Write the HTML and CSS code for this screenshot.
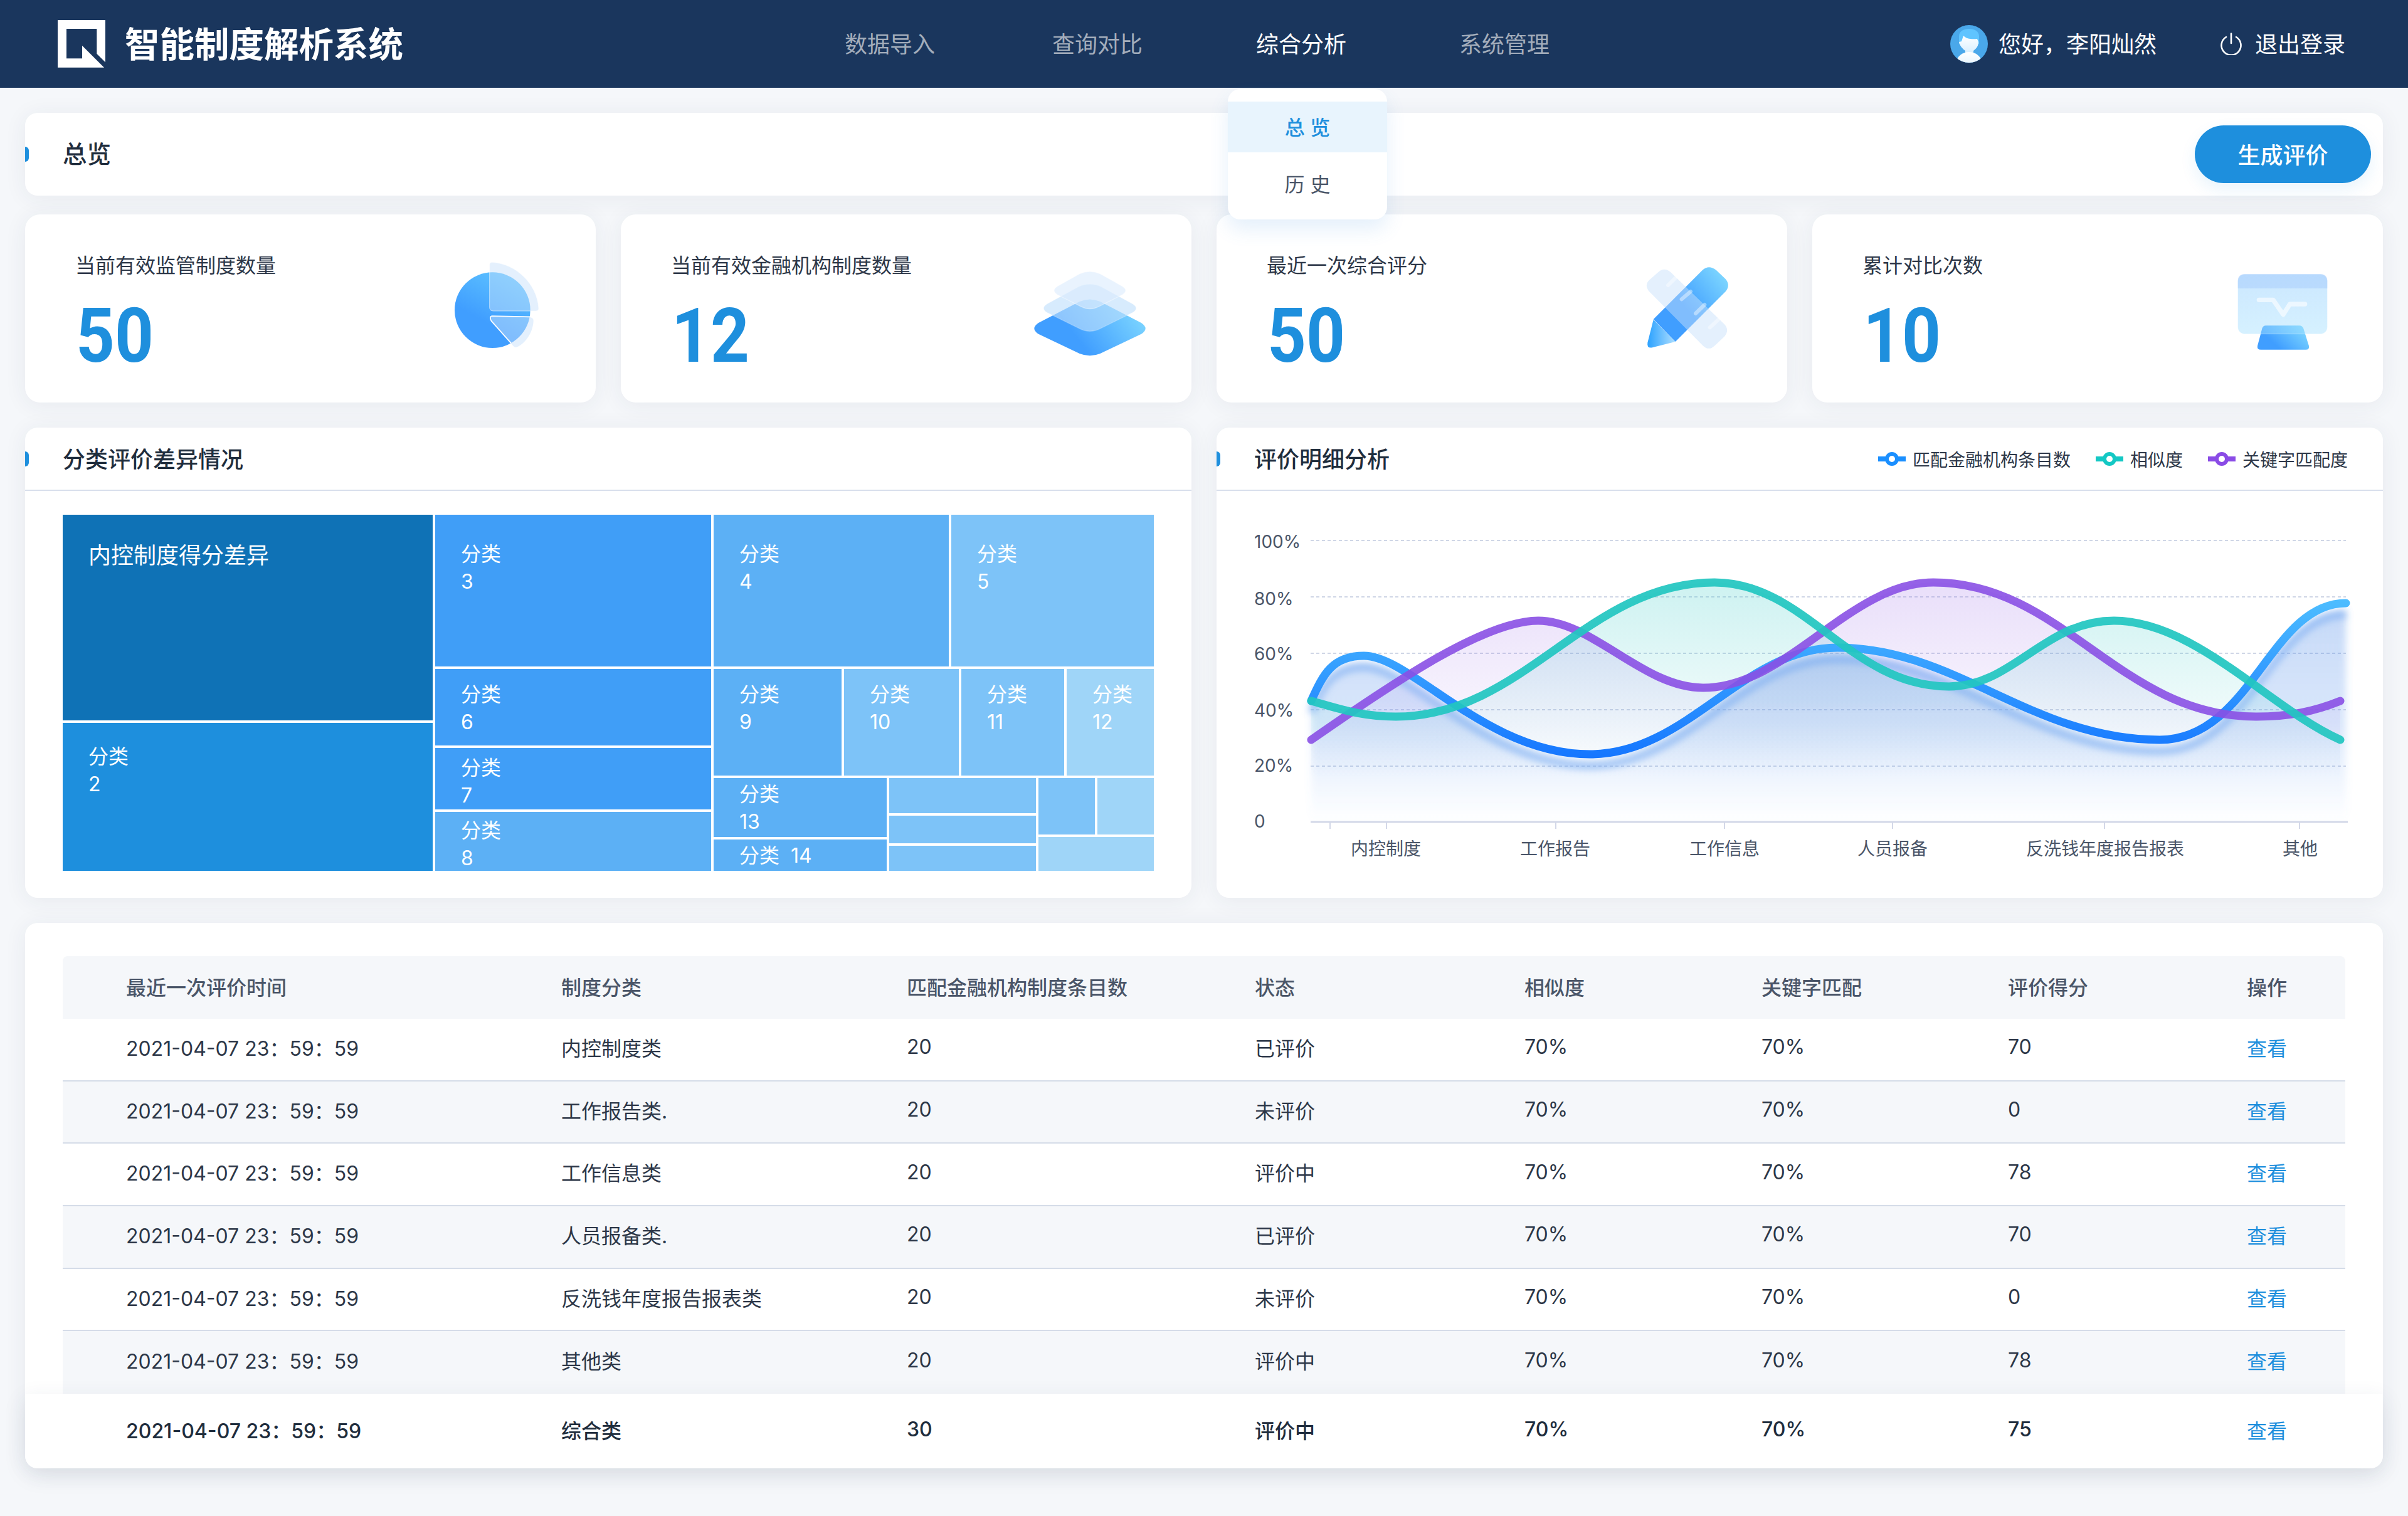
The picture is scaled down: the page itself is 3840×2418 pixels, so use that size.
FILE: index.html
```html
<!DOCTYPE html>
<html lang="zh-CN">
<head>
<meta charset="utf-8">
<title>智能制度解析系统</title>
<link rel="stylesheet" href="styles.css">
</head>
<body>
<header class="topbar">
  <svg class="logo" viewBox="96 66 228 228"><path fill="#fff" d="M96 66H324V268L283 227V108H138V250H213V188L318 293H96Z"/></svg>
  <div class="brand">智能制度解析系统</div>
  <nav class="nav">
    <a class="nav-item">数据导入</a>
    <a class="nav-item">查询对比</a>
    <div class="nav-item is-active">综合分析
      <div class="dropdown">
        <div class="dropdown-item is-current">总 览</div>
        <div class="dropdown-item">历 史</div>
      </div>
    </div>
    <a class="nav-item">系统管理</a>
  </nav>
  <div class="user">
    <svg class="avatar" viewBox="0 0 60 60">
      <defs>
        <clipPath id="avc"><circle cx="30" cy="30" r="30"/></clipPath>
        <linearGradient id="avw" x1="0" y1="0" x2="0" y2="1"><stop offset="0" stop-color="#fff"/><stop offset="1" stop-color="#d7efff"/></linearGradient>
      </defs>
      <g clip-path="url(#avc)">
        <rect width="60" height="60" fill="#4aa8ea"/>
        <path fill="#5fc4ff" d="M14 30V18C14 10 21 6 30 6S46 10 46 18V30Z"/>
        <path fill="url(#avw)" d="M21 17C26 22 34 23 43 22L45 27C45 34 41 38 37 41V45H24V41C20 38 15 33 14 27L18 26Z"/>
        <ellipse cx="30" cy="60" rx="20" ry="17" fill="url(#avw)"/>
      </g>
    </svg>
    <span class="user-name">您好，李阳灿然</span>
    <svg class="power" viewBox="0 0 34 36"><path fill="none" stroke="#fff" stroke-width="2.6" stroke-linecap="round" d="M9 7A15.5 15.5 0 1 0 25 7M17 1.5V17"/></svg>
    <span class="logout">退出登录</span>
  </div>
</header>

<main class="page">
  <section class="panel overview">
    <i class="marker"></i>
    <h1 class="panel-title">总览</h1>
    <button class="primary-btn">生成评价</button>
  </section>

  <section class="stats">
    <article class="stat">
      <div class="stat-text"><div class="stat-label">当前有效监管制度数量</div><div class="stat-value">50</div></div>
      <svg class="stat-icon" viewBox="30 30 720 600">
        <defs>
          <linearGradient id="g1" x1="0.75" y1="0" x2="0.4" y2="0.65"><stop offset="0" stop-color="#5fc4ff"/><stop offset="1" stop-color="#409eff"/></linearGradient>
        </defs>
        <circle cx="376" cy="314" r="181" fill="url(#g1)"/>
        <path fill="#c6dffa" fill-opacity=".48" stroke="#fff" stroke-opacity=".55" stroke-width="3" d="M375 85C490 92 590 190 597 305Q597 318 584 318H380Q362 318 362 300V98Q362 85 375 85Z"/>
        <path fill="#c6dffa" fill-opacity=".48" d="M373 342L555 348Q572 350 572 365C570 420 535 470 495 490Q485 495 475 485L370 365Q360 345 373 342Z"/>
        <path fill="none" stroke="#fff" stroke-width="5" d="M555 346L373 342Q360 345 370 365L465 472"/>
      </svg>
    </article>
    <article class="stat">
      <div class="stat-text"><div class="stat-label">当前有效金融机构制度数量</div><div class="stat-value">12</div></div>
      <svg class="stat-icon" viewBox="0 0 720 600">
        <defs>
          <linearGradient id="g2" x1="0.35" y1="0.6" x2="1" y2="0.35"><stop offset="0" stop-color="#409eff"/><stop offset="1" stop-color="#7dd6ff"/></linearGradient>
        </defs>
        <path fill="url(#g2)" d="M305 243Q354 222 403 243L600 345Q640 372 600 398L403 492Q354 512 305 492L108 398Q68 372 108 345Z"/>
        <path fill="#bfdffc" fill-opacity=".62" stroke="#fff" stroke-opacity=".25" stroke-width="4" d="M300 172Q354 148 408 172L560 255Q590 275 560 295L408 370Q354 400 300 370L148 295Q118 275 148 255Z"/>
        <path fill="#dcecfd" fill-opacity=".62" stroke="#fff" stroke-opacity=".4" stroke-width="4" d="M305 110Q354 88 403 110L510 170Q540 190 510 210L400 265Q354 290 308 265L198 210Q168 190 198 170Z"/>
      </svg>
    </article>
    <article class="stat">
      <div class="stat-text"><div class="stat-label">最近一次综合评分</div><div class="stat-value">50</div></div>
      <svg class="stat-icon" viewBox="-60 0 720 600">
        <defs>
          <linearGradient id="g3" gradientUnits="userSpaceOnUse" x1="200" y1="360" x2="490" y2="130"><stop offset=".35" stop-color="#409eff"/><stop offset="1" stop-color="#7dd6ff"/></linearGradient>
          <linearGradient id="g3b" gradientUnits="userSpaceOnUse" x1="120" y1="400" x2="240" y2="400"><stop offset="0" stop-color="#33a5ff"/><stop offset="1" stop-color="#a8dcff"/></linearGradient>
        </defs>
        <path fill="url(#g3)" d="M140 328L375 92Q405 65 440 92L485 135Q510 165 485 195L245 435Z"/>
        <path fill="url(#g3b)" d="M140 330L245 435L135 463Q108 468 112 440Z"/>
        <path fill="#c6dffa" fill-opacity=".48" d="M160 105Q190 75 222 102L480 352Q505 380 480 410L432 455Q405 480 378 455L120 195Q95 165 120 140Z"/>
        <path fill="none" stroke="#fff" stroke-opacity=".42" stroke-width="18" stroke-linecap="round" d="M210 165L245 130M275 232L318 195M342 300L385 258M410 367L450 330"/>
      </svg>
    </article>
    <article class="stat">
      <div class="stat-text"><div class="stat-label">累计对比次数</div><div class="stat-value">10</div></div>
      <svg class="stat-icon" viewBox="-30 -30 720 600">
        <defs>
          <linearGradient id="g4" x1="0.1" y1="0.75" x2="1" y2="0.3"><stop offset=".2" stop-color="#409eff"/><stop offset="1" stop-color="#7dd6ff"/></linearGradient>
          <linearGradient id="g4b" x1="0" y1="0" x2="0" y2="1"><stop offset="0" stop-color="#8ccafe"/><stop offset="1" stop-color="#a3e0ff"/></linearGradient>
        </defs>
        <path fill="url(#g4)" d="M250 328H410Q425 328 430 342L456 425Q460 443 440 443H226Q206 443 210 425L232 342Q236 328 250 328Z"/>
        <rect x="116" y="82" width="428" height="286" rx="32" fill="url(#g4b)" fill-opacity=".45" stroke="#fff" stroke-opacity=".3" stroke-width="3"/>
        <path fill="#8cb8fb" fill-opacity=".3" d="M148 82H512Q544 82 544 114V150H116V114Q116 82 148 82Z"/>
        <path fill="none" stroke="#fff" stroke-opacity=".6" stroke-width="22" stroke-linecap="round" stroke-linejoin="round" d="M217 205H285L333 275L365 225H437"/>
      </svg>
    </article>
  </section>

  <section class="charts">
    <article class="panel chart-panel">
      <header class="panel-head"><i class="marker"></i><h2 class="panel-title">分类评价差异情况</h2></header>
      <div class="treemap">
        <div class="tm-col" style="width:590px">
          <div class="cell tone-0 pad-f big" style="height:328px"><span>内控制度得分差异</span></div>
          <div class="cell tone-1 pad-c" style="height:236px"><span>分类</span><span>2</span></div>
        </div>
        <div class="tm-col" style="width:440px">
          <div class="cell tone-2 pad-a" style="height:242px"><span>分类</span><span>3</span></div>
          <div class="cell tone-2 pad-b" style="height:122px"><span>分类</span><span>6</span></div>
          <div class="cell tone-2 pad-d" style="height:98px"><span>分类</span><span>7</span></div>
          <div class="cell tone-3 pad-g" style="height:94px"><span>分类</span><span>8</span></div>
        </div>
        <div class="tm-col" style="width:702px">
          <div class="tm-row" style="height:242px">
            <div class="cell tone-3 pad-a" style="width:375px"><span>分类</span><span>4</span></div>
            <div class="cell tone-4 pad-a" style="width:323px"><span>分类</span><span>5</span></div>
          </div>
          <div class="tm-row" style="height:170px">
            <div class="cell tone-3 pad-b" style="width:204px"><span>分类</span><span>9</span></div>
            <div class="cell tone-4 pad-b" style="width:183px"><span>分类</span><span>10</span></div>
            <div class="cell tone-4 pad-b" style="width:164px"><span>分类</span><span>11</span></div>
            <div class="cell tone-5 pad-b" style="width:139px"><span>分类</span><span>12</span></div>
          </div>
          <div class="tm-row" style="height:148px">
            <div class="tm-col" style="width:276px">
              <div class="cell tone-3 pad-e" style="height:94px"><span>分类</span><span>13</span></div>
              <div class="cell tone-3 pad-e" style="height:50px"><span>分类&nbsp; 14</span></div>
            </div>
            <div class="tm-col" style="width:234px">
              <div class="cell tone-4" style="height:56px"></div>
              <div class="cell tone-4" style="height:44px"></div>
              <div class="cell tone-4" style="height:40px"></div>
            </div>
            <div class="tm-col" style="width:184px">
              <div class="tm-row" style="height:90px">
                <div class="cell tone-4" style="width:90px"></div>
                <div class="cell tone-5" style="width:90px"></div>
              </div>
              <div class="cell tone-5" style="height:54px"></div>
            </div>
          </div>
        </div>
      </div>
    </article>

    <article class="panel chart-panel">
      <header class="panel-head"><i class="marker"></i><h2 class="panel-title">评价明细分析</h2>
        <ul class="legend">
          <li class="legend-item"><svg class="legend-mark" viewBox="0 0 44 24"><path d="M0 12H44" stroke="#1a8fff" stroke-width="8"/><circle cx="22" cy="12" r="8" fill="#fff" stroke="#1a8fff" stroke-width="6"/></svg>匹配金融机构条目数</li>
          <li class="legend-item"><svg class="legend-mark" viewBox="0 0 44 24"><path d="M0 12H44" stroke="#14c8c4" stroke-width="8"/><circle cx="22" cy="12" r="8" fill="#fff" stroke="#14c8c4" stroke-width="6"/></svg>相似度</li>
          <li class="legend-item"><svg class="legend-mark" viewBox="0 0 44 24"><path d="M0 12H44" stroke="#8a4be6" stroke-width="8"/><circle cx="22" cy="12" r="8" fill="#fff" stroke="#8a4be6" stroke-width="6"/></svg>关键字匹配度</li>
        </ul>
      </header>
      <svg class="line-chart" viewBox="1940 784 1860 648">
        <defs>
          <linearGradient id="fb" gradientUnits="userSpaceOnUse" x1="0" y1="960" x2="0" y2="1300"><stop offset="0" stop-color="#3d7fe6" stop-opacity=".3"/><stop offset=".55" stop-color="#5c96ee" stop-opacity=".22"/><stop offset="1" stop-color="#6aa4f5" stop-opacity="0"/></linearGradient>
          <linearGradient id="ft" gradientUnits="userSpaceOnUse" x1="0" y1="925" x2="0" y2="1240"><stop offset="0" stop-color="#2ec8c4" stop-opacity=".24"/><stop offset="1" stop-color="#2ec8c4" stop-opacity="0"/></linearGradient>
          <linearGradient id="fp" gradientUnits="userSpaceOnUse" x1="0" y1="925" x2="0" y2="1240"><stop offset="0" stop-color="#8f5ae5" stop-opacity=".2"/><stop offset="1" stop-color="#8f5ae5" stop-opacity="0"/></linearGradient>
          <linearGradient id="sb" gradientUnits="userSpaceOnUse" x1="0" y1="960" x2="0" y2="1205"><stop offset="0" stop-color="#4cbcff"/><stop offset="1" stop-color="#1677ff"/></linearGradient>
          <filter id="soft" x="-5%" y="-20%" width="110%" height="140%"><feGaussianBlur stdDeviation="6"/></filter>
        </defs>
        <g class="grid">
          <path d="M2090 862H3741"/><path d="M2090 952H3741"/><path d="M2090 1042H3741"/><path d="M2090 1132H3741"/><path d="M2090 1222H3741"/>
        </g>
        <g class="axis-y">
          <text x="2000" y="874">100%</text><text x="2000" y="965">80%</text><text x="2000" y="1053">60%</text><text x="2000" y="1143">40%</text><text x="2000" y="1231">20%</text><text x="2000" y="1320">0</text>
        </g>
        <path fill="url(#fb)" filter="url(#soft)" transform="translate(0 12)" d="M2091 1118C2110 1075 2125 1046 2175 1046C2250 1046 2370 1203 2536 1203C2690 1203 2780 1033 2930 1033C3120 1033 3240 1180 3444 1180C3590 1180 3620 962 3741 962V1295H2091Z"/>
        <path fill="url(#ft)" d="M2091 1118C2135 1130 2170 1143 2226 1143C2430 1143 2530 929 2734 929C2880 929 2950 1095 3108 1095C3210 1095 3260 990 3371 990C3500 990 3620 1130 3732 1180V1311H2091Z"/>
        <path fill="url(#fp)" d="M2091 1180C2230 1083 2370 990 2453 990C2540 990 2620 1097 2716 1097C2850 1097 2950 929 3083 929C3290 929 3380 1143 3598 1143C3650 1143 3690 1135 3732 1118V1311H2091Z"/>
        <path fill="none" stroke="#6fa6f2" stroke-opacity=".6" stroke-width="12" filter="url(#soft)" transform="translate(0 18)" d="M2091 1118C2110 1075 2125 1046 2175 1046C2250 1046 2370 1203 2536 1203C2690 1203 2780 1033 2930 1033C3120 1033 3240 1180 3444 1180C3590 1180 3620 962 3741 962"/>
        <path class="curve" stroke="url(#sb)" d="M2091 1118C2110 1075 2125 1046 2175 1046C2250 1046 2370 1203 2536 1203C2690 1203 2780 1033 2930 1033C3120 1033 3240 1180 3444 1180C3590 1180 3620 962 3741 962"/>
        <path class="curve curve-purple" d="M2091 1180C2230 1083 2370 990 2453 990C2540 990 2620 1097 2716 1097C2850 1097 2950 929 3083 929C3290 929 3380 1143 3598 1143C3650 1143 3690 1135 3732 1118"/>
        <path class="curve curve-teal" d="M2091 1118C2135 1130 2170 1143 2226 1143C2430 1143 2530 929 2734 929C2880 929 2950 1095 3108 1095C3210 1095 3260 990 3371 990C3500 990 3620 1130 3732 1180"/>
        <path class="axis-line" d="M2090 1311H3744"/>
        <path class="tick" d="M2121 1311V1322M2211 1311V1322M2481 1311V1322M2750 1311V1322M3018 1311V1322M3356 1311V1322M3667 1311V1322"/>
        <g class="axis-x">
          <text x="2210" y="1364">内控制度</text><text x="2480" y="1364">工作报告</text><text x="2750" y="1364">工作信息</text><text x="3018" y="1364">人员报备</text><text x="3357" y="1364">反洗钱年度报告报表</text><text x="3668" y="1364">其他</text>
        </g>
      </svg>
    </article>
  </section>

  <section class="panel table-panel">
    <div class="t-row t-head"><span>最近一次评价时间</span><span>制度分类</span><span>匹配金融机构制度条目数</span><span>状态</span><span>相似度</span><span>关键字匹配</span><span>评价得分</span><span>操作</span></div>
    <div class="t-row"><span>2021-04-07 23：59：59</span><span>内控制度类</span><span>20</span><span>已评价</span><span>70%</span><span>70%</span><span>70</span><a class="link">查看</a></div>
    <div class="t-row t-alt"><span>2021-04-07 23：59：59</span><span>工作报告类.</span><span>20</span><span>未评价</span><span>70%</span><span>70%</span><span>0</span><a class="link">查看</a></div>
    <div class="t-row"><span>2021-04-07 23：59：59</span><span>工作信息类</span><span>20</span><span>评价中</span><span>70%</span><span>70%</span><span>78</span><a class="link">查看</a></div>
    <div class="t-row t-alt"><span>2021-04-07 23：59：59</span><span>人员报备类.</span><span>20</span><span>已评价</span><span>70%</span><span>70%</span><span>70</span><a class="link">查看</a></div>
    <div class="t-row"><span>2021-04-07 23：59：59</span><span>反洗钱年度报告报表类</span><span>20</span><span>未评价</span><span>70%</span><span>70%</span><span>0</span><a class="link">查看</a></div>
    <div class="t-row t-alt t-last"><span>2021-04-07 23：59：59</span><span>其他类</span><span>20</span><span>评价中</span><span>70%</span><span>70%</span><span>78</span><a class="link">查看</a></div>
    <div class="t-row t-total"><span>2021-04-07 23：59：59</span><span>综合类</span><span>30</span><span>评价中</span><span>70%</span><span>70%</span><span>75</span><a class="link">查看</a></div>
  </section>
</main>
</body>
</html>
```
FILE: styles.css
```css
* { box-sizing: border-box; }
html, body { margin: 0; padding: 0; height: 2418px; overflow: hidden; }
body {
  width: 3840px;
  background: #f5f7fa;
  font-family: "Inter", "Noto Sans CJK SC", sans-serif;
  color: #2d3748;
  font-size: 32px;
}
h1, h2, ul { margin: 0; padding: 0; list-style: none; }

.topbar {
  height: 140px;
  background: #1a365d;
  display: flex;
  align-items: center;
  padding: 0 100px 0 92px;
  color: #fff;
}
.logo { width: 76px; height: 76px; flex: none; }
.brand {
  margin: 0 0 6px 31px;
  width: 449px;
  font-size: 55.5px;
  font-weight: 700;
  white-space: nowrap;
}
.nav {
  display: grid;
  grid-template-columns: 331px 325px 324px 144px;
  margin: 0 0 4px 699px;
  font-size: 36px;
}
.nav-item { position: relative; color: #a3adbb; white-space: nowrap; }
.nav-item.is-active { color: #fff; }
.dropdown {
  position: absolute;
  top: 100px;
  left: -45px;
  width: 254px;
  height: 208px;
  padding-top: 20px;
  background: #fff;
  border-radius: 20px;
  box-shadow: 0 16px 30px rgba(70, 150, 230, .14);
  z-index: 5;
  font-size: 32px;
  color: #4a5568;
  text-align: center;
}
.dropdown-item { height: 81px; line-height: 84px; margin-bottom: 10px; }
.dropdown-item.is-current { background: #e8f4fd; color: #1e8fdd; font-weight: 500; }

.user { margin-left: auto; display: flex; align-items: center; font-size: 36px; }
.avatar { width: 60px; height: 60px; }
.user-name { margin: 0 0 4px 17px; width: 252px; white-space: nowrap; }
.power { width: 34px; height: 36px; margin-left: 102px; }
.logout { margin: 0 0 4px 21px; white-space: nowrap; }

.page { padding: 40px 40px 76px; display: flex; flex-direction: column; }
.panel {
  background: #fff;
  border-radius: 20px;
  box-shadow: 0 4px 36px rgba(40, 60, 90, .07);
}
.marker {
  flex: none;
  display: block;
  width: 6px;
  height: 24px;
  border-radius: 0 12px 12px 0;
  background: #1e8fdd;
}
.panel-title { font-size: 36px; font-weight: 500; color: #1f2d3d; margin: 0 0 4px 54px; white-space: nowrap; }

.overview {
  height: 132px;
  display: flex;
  align-items: center;
  padding-right: 19px;
}
.overview .panel-title { font-size: 38.5px; margin-bottom: 6px; }
.primary-btn {
  margin-left: auto;
  width: 281px;
  height: 92px;
  border: 0;
  border-radius: 46px;
  padding: 0 0 3px;
  background: #1e8fdd;
  color: #fff;
  font: 500 36px "Inter", "Noto Sans CJK SC", sans-serif;
  box-shadow: 0 10px 24px rgba(30, 143, 221, .1);
}

.stats { display: grid; grid-template-columns: repeat(4, 910px); gap: 40px; margin-top: 30px; }
.stat {
  height: 300px;
  background: #fff;
  border-radius: 24px;
  box-shadow: 0 4px 36px rgba(40, 60, 90, .07);
  display: flex;
  justify-content: space-between;
  padding: 60px 40px 0 80px;
}
.stat-label { font-size: 32px; line-height: 44px; color: #2d3748; white-space: nowrap; }
.stat-value {
  margin: 30px 0 0 1px;
  font-family: "Roboto", sans-serif;
  font-weight: 700;
  font-size: 120px;
  line-height: 120px;
  color: #1e8fdd;
  transform: scaleX(.9);
  transform-origin: left center;
}
.stat-icon { width: 240px; height: 200px; margin-top: -2px; flex: none; }

.charts { display: grid; grid-template-columns: 1860px 1860px; gap: 40px; margin-top: 40px; }
.chart-panel { height: 750px; }
.panel-head {
  height: 101px;
  border-bottom: 2px solid #d9dfec;
  display: flex;
  align-items: center;
}
.legend { margin-left: auto; padding-right: 56px; display: flex; gap: 40px; font-size: 28px; color: #2d3748; }
.legend-item { display: flex; align-items: center; white-space: nowrap; }
.legend-mark { width: 44px; height: 24px; margin-right: 11px; }

.treemap {
  margin: 38px 60px 0;
  height: 568px;
  display: flex;
  gap: 4px;
}
.tm-col { display: flex; flex-direction: column; gap: 4px; flex: none; }
.tm-row { display: flex; gap: 4px; flex: none; }
.cell {
  flex: none;
  overflow: hidden;
  padding-left: 41px;
  color: #fff;
  font-size: 32px;
  line-height: 44px;
  white-space: nowrap;
}
.cell span { display: block; }
.big { font-size: 36px; }
.tone-0 { background: #0f72b6; }
.tone-1 { background: #1e8fdd; }
.tone-2 { background: #409ef7; }
.tone-3 { background: #5cb0f5; }
.tone-4 { background: #7dc3f8; }
.tone-5 { background: #9fd5f8; }
.pad-a { padding-top: 41px; }
.pad-b { padding-top: 19px; }
.pad-c { padding-top: 32px; }
.pad-d { padding-top: 10px; }
.pad-e { padding-top: 4px; }
.pad-f { padding-top: 43px; }
.pad-g { padding-top: 8px; }

.line-chart { display: block; width: 1860px; height: 648px; margin-top: 1px; }
.line-chart text { font-size: 28px; fill: #4a5568; }
.grid path { stroke: #cfd6e6; stroke-width: 2; stroke-dasharray: 5 4; fill: none; }
.axis-line { stroke: #d3d8e8; stroke-width: 3; fill: none; }
.tick { stroke: #d3d8e8; stroke-width: 2; fill: none; }
.axis-x text { text-anchor: middle; }
.curve { fill: none; stroke-width: 13; stroke-linecap: round; }
.curve-teal { stroke: #22c6c1; stroke-opacity: .93; }
.curve-purple { stroke: #8a50e4; stroke-opacity: .9; }

.table-panel { margin-top: 40px; height: 870px; padding: 53px 60px 0; }
.t-row {
  display: grid;
  grid-template-columns: 694px 551px 555px 430px 378px 393px 381px 157px;
  align-items: center;
  height: 99.7px;
  padding: 0 0 8px 101px;
  border-bottom: 2px solid #d5dce8;
  color: #2d3748;
  white-space: nowrap;
}
.t-head { height: 100px; padding-bottom: 4px; background: #f5f7fa; border-bottom: 0; border-radius: 8px 8px 0 0; color: #4a5568; font-weight: 500; }
.t-alt { background: #f5f7fa; }
.t-last { border-bottom: 0; }
.t-total {
  position: relative;
  margin: 0 -60px;
  padding: 0 0 6px 161px;
  height: 119px;
  background: #fff;
  border-bottom: 0;
  border-radius: 0 0 20px 20px;
  color: #1f2d3d;
  font-weight: 500;
  box-shadow: 0 10px 36px rgba(40, 60, 90, .1);
}
.link { color: #1e8fdd; font-weight: 400; }
```
